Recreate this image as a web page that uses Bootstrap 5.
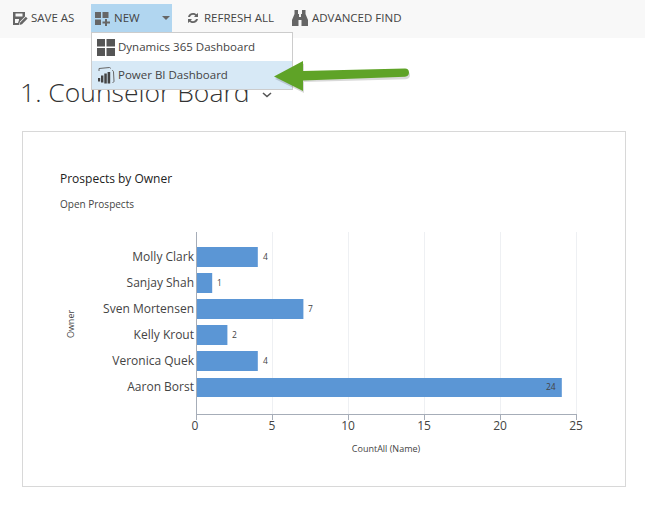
<!DOCTYPE html>
<html lang="en">
<head>
  <meta charset="UTF-8">
  <title>Dashboards</title>
  <link rel="stylesheet" href="https://cdn.jsdelivr.net/npm/bootstrap@5.3.3/dist/css/bootstrap.min.css">
  <script src="https://cdn.jsdelivr.net/npm/bootstrap@5.3.3/dist/js/bootstrap.bundle.min.js"></script>
  <style>
    body { font-family: "Open Sans", "Noto Sans", sans-serif; background: #fff; color: #444; overflow: hidden; }
    .cmd-bar { height: 38px; background: #f8f8f8; padding: 4px 0 6px 13px; }
    .cmd-btn { display: flex; align-items: center; height: 28px; font-size: 11.5px; color: #444; white-space: nowrap; }
    .cmd-btn svg { display: block; flex: none; fill: #666; }
    .cmd-save { width: 78px; gap: 3px; }
    .cmd-new { width: 81px; background: #b1d6f0; padding-left: 4px; gap: 4px; }
    .cmd-caret { width: 0; height: 0; margin-left: 18px; border: 4px solid transparent; border-top: 4px solid #666; border-bottom: 0; }
    .cmd-refresh { margin-left: 15px; gap: 5px; }
    .cmd-find { margin-left: 18px; gap: 4px; }
    .new-menu { position: absolute; left: 91px; top: 32px; width: 202px; height: 58px; padding: 0; margin: 0; border: 1px solid #ccc; border-radius: 0; z-index: 5; box-shadow: none; }
    .new-menu .dropdown-item { display: flex; align-items: center; gap: 3px; height: 28px; padding: 0 0 0 5px; font-size: 11.5px; color: #444; }
    .new-menu .dropdown-item.is-hot { background: #d7e9f6; }
    .arrow-note { position: absolute; left: 270px; top: 56px; z-index: 6; }
    .page-title { margin: 37px 0 0 20px; height: 34px; font-size: 26.5px; font-weight: 300; line-height: 34px; color: #333; font-family: "Open Sans", sans-serif; }
    .page-title svg { margin-left: 12px; vertical-align: 4px; }
    .chart-box { width: 604px; height: 356px; margin: 22px 0 0 22px; border: 1px solid #d8d8d8; border-radius: 0; padding: 0; }
    .chart-box svg { display: block; font-family: "Open Sans", sans-serif; }
  </style>
</head>
<body>

  <div class="cmd-bar d-flex">
    <div class="cmd-btn cmd-save">
      <svg width="15" height="14" viewBox="0 0 15 14"><path d="M0 1h12v4.5L7 10.500 5.800 14H0zM2.500 2.500v3h7v-3zM2 8v4h3l1-3V8z" fill-rule="evenodd"/><path d="M12.800 5.800l1.800 1.800-5.600 5.600-2.500.7.700-2.500z"/></svg>
      <span>SAVE AS</span>
    </div>
    <div class="cmd-btn cmd-new">
      <svg width="15" height="15" viewBox="0 0 15 15"><path d="M0 1h6v6H0zM7.500 1h6v6h-6zM0 8.500h6v5.500H0zM10 8h2v2.500h3v2h-3V15h-2v-2.500H7.500v-2H10z"/></svg>
      <span>NEW</span>
      <i class="cmd-caret"></i>
    </div>
    <div class="cmd-btn cmd-refresh">
      <svg width="12" height="12" viewBox="0 0 12 12"><path d="M1 5C1.500 2.500 3.500 1 6 1c1.400 0 2.500.5 3.400 1.300L11 1v4H7l1.300-1.400C7.700 3.100 6.900 2.800 6 2.800 4.700 2.800 3.500 3.700 3 5zM11 7c-.5 2.500-2.500 4-5 4-1.400 0-2.500-.5-3.400-1.300L1 11V7h4L3.700 8.400c.6.500 1.400.8 2.300.8 1.300 0 2.500-.9 3-2.200z"/></svg>
      <span>REFRESH ALL</span>
    </div>
    <div class="cmd-btn cmd-find">
      <svg width="16" height="16" viewBox="0 0 16 16"><path d="M2.500 0h3.500v4H7v3h2V4h1V0h3.500v4l2.500 6v6H9.500v-6h-3v6H0v-6l2.500-6z"/></svg>
      <span>ADVANCED FIND</span>
    </div>
  </div>

  <ul class="dropdown-menu show new-menu list-unstyled">
    <li>
      <a class="dropdown-item" href="#">
        <svg width="18" height="17" viewBox="0 0 18 17" fill="#555"><path d="M0 0h8v7.500H0zM9.500 0H18v7.500H9.500zM0 9h8v8H0zM9.500 9H18v8H9.500z"/></svg>
        <span>Dynamics 365 Dashboard</span>
      </a>
    </li>
    <li>
      <a class="dropdown-item is-hot" href="#">
        <svg width="18" height="17" viewBox="0 0 18 17"><path d="M2 4V1.500L12.500.5c.6 0 1 .4 1 1M15 3.500c1 0 1.500.5 1.500 1.500l.5 9c0 1-.5 1.500-1.500 1.500" fill="none" stroke="#666" stroke-width="1"/><path d="M1 11h2.200v3.500H1zM4 8.500h2.400v7H4zM7.300 6.500h2.500v10H7.300zM10.600 5h2.600v11.500h-2.600z" fill="#444"/></svg>
        <span>Power BI Dashboard</span>
      </a>
    </li>
  </ul>

  <svg class="arrow-note" width="145" height="40" viewBox="0 0 145 40">
    <path d="M4 21L33 5.500V15l102-2c2.500 0 4 1.500 4 4s-1.500 4-4 4.300L33 24v11z" fill="#000" opacity=".15" transform="translate(1 2)"/>
    <path d="M4 20.500L33 5v10l102-2.500c2.500 0 4 1.500 4 4s-1.500 4-4 4.300L33 24.500V35z" fill="#5fa327"/>
  </svg>

  <h1 class="page-title">1. Counselor Board<svg width="10" height="6" viewBox="0 0 10 6"><path d="M1 1l4 3.500L9 1" fill="none" stroke="#555" stroke-width="1.600"/></svg></h1>

  <div class="card chart-box">
    <!-- svg origin is the inside corner of the box: page x-23, y-132 -->
    <svg width="602" height="354" viewBox="0 0 602 354">
      <text x="37" y="51" font-size="12" fill="#222">Prospects by Owner</text>
      <text x="37" y="76" font-size="10" fill="#444">Open Prospects</text>

      <g stroke="#eef0f3" stroke-width="1">
        <line x1="249.500" y1="100" x2="249.500" y2="282"/>
        <line x1="325.500" y1="100" x2="325.500" y2="282"/>
        <line x1="401.500" y1="100" x2="401.500" y2="282"/>
        <line x1="477.500" y1="100" x2="477.500" y2="282"/>
        <line x1="553.500" y1="100" x2="553.500" y2="282"/>
      </g>

      <g fill="#5b96d5">
        <rect x="174" y="115" width="60.800" height="20"/>
        <rect x="174" y="141" width="15.200" height="20"/>
        <rect x="174" y="167" width="106.400" height="20"/>
        <rect x="174" y="193" width="30.400" height="20"/>
        <rect x="174" y="219" width="60.800" height="20"/>
        <rect x="174" y="246" width="364.800" height="19"/>
      </g>

      <g stroke="#a6adb8" stroke-width="1">
        <line x1="173.500" y1="100" x2="173.500" y2="288"/>
        <line x1="173" y1="282.500" x2="554" y2="282.500"/>
        <line x1="249.500" y1="282" x2="249.500" y2="288"/>
        <line x1="325.500" y1="282" x2="325.500" y2="288"/>
        <line x1="401.500" y1="282" x2="401.500" y2="288"/>
        <line x1="477.500" y1="282" x2="477.500" y2="288"/>
        <line x1="553.500" y1="282" x2="553.500" y2="288"/>
      </g>

      <g font-size="12" fill="#444" text-anchor="end">
        <text x="171" y="129">Molly Clark</text>
        <text x="171" y="155">Sanjay Shah</text>
        <text x="171" y="181">Sven Mortensen</text>
        <text x="171" y="207">Kelly Krout</text>
        <text x="171" y="233">Veronica Quek</text>
        <text x="171" y="259">Aaron Borst</text>
      </g>

      <g font-size="8.500" fill="#444">
        <text x="240" y="128">4</text>
        <text x="194" y="154">1</text>
        <text x="285" y="180">7</text>
        <text x="209" y="206">2</text>
        <text x="240" y="232">4</text>
        <text x="523" y="258">24</text>
      </g>

      <g font-size="12" fill="#444" text-anchor="middle">
        <text x="172" y="298">0</text>
        <text x="249" y="298">5</text>
        <text x="325" y="298">10</text>
        <text x="401" y="298">15</text>
        <text x="477" y="298">20</text>
        <text x="553" y="298">25</text>
      </g>

      <text x="363" y="320" font-size="9" fill="#444" text-anchor="middle">CountAll (Name)</text>
      <text transform="translate(51 192) rotate(-90)" font-size="9" fill="#444" text-anchor="middle">Owner</text>
    </svg>
  </div>

</body>
</html>
